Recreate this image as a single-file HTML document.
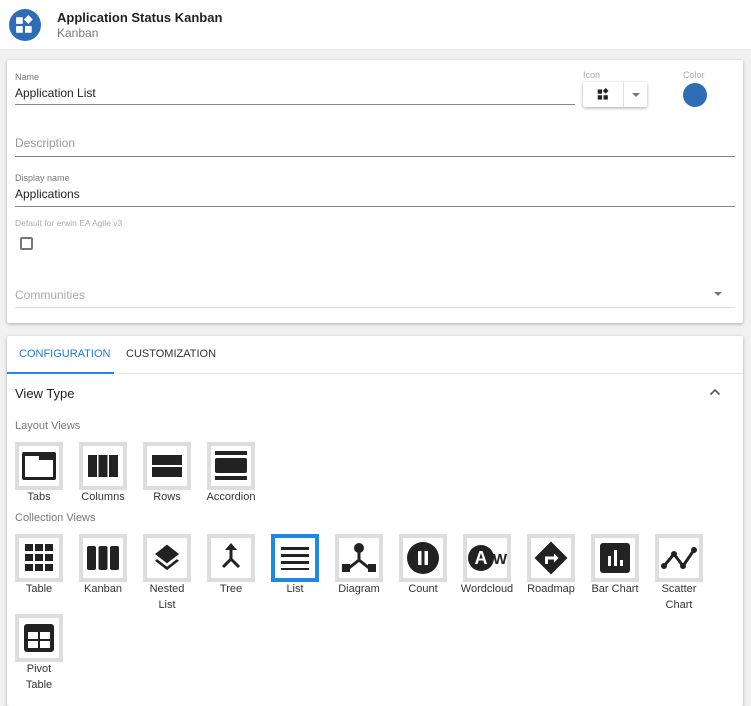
<!DOCTYPE html>
<html><head><meta charset="utf-8"><style>
*{box-sizing:border-box;margin:0;padding:0}
body{width:751px;height:695px;overflow:hidden;background:#f1f1f1;font-family:"Liberation Sans",Roboto,sans-serif;color:#222;position:relative}
.abs{position:absolute}
.hdr{left:0;top:0;width:751px;height:50px;background:#fff;border-bottom:1px solid #e4e4e4}
.card{background:#fff;box-shadow:0 1px 3px rgba(0,0,0,.3);border-radius:2px}
.lbl{font-size:9px;color:#777}
.lbl2{font-size:9px;color:#aaa}
.val{font-size:12px;color:#222}
.line{height:1px;background:#888}
.tile{width:48px;height:48px;border:4px solid #ddd;background:#fff;display:flex;align-items:center;justify-content:center}
.tile svg{flex-shrink:0}
.tile.sel{border-color:#1e88e5}
.tl{font-size:11px;color:#333;text-align:center;width:64px;line-height:16px}
</style></head><body>
<div class="abs hdr">
 <div class="abs" style="left:9px;top:9px;width:32px;height:32px;border-radius:50%;background:#2e6db3"></div>
 <svg class="abs" style="left:15px;top:15px" width="20" height="20" viewBox="0 0 18 18" fill="#fff"><rect x="1" y="2" width="6" height="6"/><rect x="1" y="10" width="6" height="6"/><rect x="9" y="10" width="6" height="6"/><path d="M12 0l4 4-4 4-4-4z"/></svg>
 <div class="abs" style="left:57px;top:10px;font-size:13px;font-weight:bold;color:#222">Application Status Kanban</div>
 <div class="abs" style="left:57px;top:26px;font-size:12px;color:#777">Kanban</div>
</div>
<div class="abs card" style="left:7px;top:60px;width:736px;height:263px"></div>
<div class="abs lbl" style="left:15px;top:72px">Name</div>
<div class="abs val" style="left:15px;top:86px">Application List</div>
<div class="abs line" style="left:15px;top:104px;width:560px"></div>
<div class="abs lbl2" style="left:583px;top:70px">Icon</div>
<div class="abs" style="left:583px;top:82px;width:64px;height:25px;background:#fff;box-shadow:0 1px 3px rgba(0,0,0,.35);border-radius:2px">
 <svg class="abs" style="left:14px;top:6px" width="13" height="13" viewBox="0 0 18 18" fill="#222"><rect x="1" y="2" width="6" height="6"/><rect x="1" y="10" width="6" height="6"/><rect x="9" y="10" width="6" height="6"/><path d="M12 0l4 4-4 4-4-4z"/></svg>
 <div class="abs" style="left:40px;top:0;width:1px;height:25px;background:#e0e0e0"></div>
 <div class="abs" style="left:49px;top:11px;border-left:4px solid transparent;border-right:4px solid transparent;border-top:4px solid #777"></div>
</div>
<div class="abs lbl2" style="left:683px;top:70px">Color</div>
<div class="abs" style="left:683px;top:83px;width:24px;height:24px;border-radius:50%;background:#2e6db3"></div>
<div class="abs" style="left:15px;top:136px;font-size:12px;color:#999">Description</div>
<div class="abs line" style="left:15px;top:156px;width:720px"></div>
<div class="abs lbl" style="left:15px;top:173px">Display name</div>
<div class="abs val" style="left:15px;top:187px">Applications</div>
<div class="abs line" style="left:15px;top:206px;width:720px"></div>
<div class="abs lbl2" style="left:15px;top:218px;font-size:8.5px">Default for erwin EA Agile v3</div>
<div class="abs" style="left:20px;top:237px;width:13px;height:13px;border:2px solid #777;border-radius:2px"></div>
<div class="abs" style="left:15px;top:288px;font-size:12px;color:#aaa">Communities</div>
<div class="abs" style="left:714px;top:292px;border-left:4px solid transparent;border-right:4px solid transparent;border-top:4px solid #777"></div>
<div class="abs" style="left:15px;top:307px;width:720px;height:1px;background:#ddd"></div>

<div class="abs card" style="left:7px;top:336px;width:736px;height:370px"></div>
<div class="abs" style="left:19px;top:348px;font-size:11px;color:#1e78d8">CONFIGURATION</div>
<div class="abs" style="left:126px;top:348px;font-size:11px;color:#333">CUSTOMIZATION</div>
<div class="abs" style="left:7px;top:373px;width:736px;height:1px;background:#e6e6e6"></div>
<div class="abs" style="left:7px;top:372px;width:107px;height:2px;background:#1e88e5"></div>
<div class="abs" style="left:15px;top:386px;font-size:13px;color:#222">View Type</div>
<svg class="abs" style="left:709px;top:388px" width="12" height="8" viewBox="0 0 12 8"><path d="M1.5 6.5L6 2l4.5 4.5" stroke="#555" stroke-width="1.6" fill="none"/></svg>
<div class="abs" style="left:15px;top:420px;font-size:11px;color:#777">Layout Views</div>
<div class="abs" style="left:15px;top:512px;font-size:11px;color:#777">Collection Views</div>

<div class="abs tile" style="left:15px;top:442px"><svg width="36" height="30" viewBox="0 0 36 30"><path d="M3 1h30a2 2 0 0 1 2 2v24a2 2 0 0 1-2 2H3a2 2 0 0 1-2-2V3a2 2 0 0 1 2-2zM4 5v21h28V9H18V5z" fill="#222" fill-rule="evenodd"/></svg></div>
<div class="abs tl" style="left:7px;top:489px">Tabs</div>
<div class="abs tile" style="left:79px;top:442px"><svg width="30" height="22" fill="#222"><rect x="0" y="0" width="9" height="22"/><rect x="10.5" y="0" width="9" height="22"/><rect x="21" y="0" width="9" height="22"/></svg></div>
<div class="abs tl" style="left:71px;top:489px">Columns</div>
<div class="abs tile" style="left:143px;top:442px"><svg width="30" height="22" fill="#222"><rect x="0" y="0" width="30" height="10"/><rect x="0" y="12" width="30" height="10"/></svg></div>
<div class="abs tl" style="left:135px;top:489px">Rows</div>
<div class="abs tile" style="left:207px;top:442px"><svg width="32" height="30" fill="#222"><rect x="0" y="0" width="32" height="4"/><rect x="0" y="7" width="32" height="15" rx="2"/><rect x="0" y="25" width="32" height="4"/></svg></div>
<div class="abs tl" style="left:199px;top:489px">Accordion</div>

<div class="abs tile" style="left:15px;top:534px"><svg width="28" height="28" fill="#222"><rect x="0" y="0" width="8" height="7"/><rect x="10" y="0" width="8" height="7"/><rect x="20" y="0" width="8" height="7"/><rect x="0" y="10" width="8" height="7"/><rect x="10" y="10" width="8" height="7"/><rect x="20" y="10" width="8" height="7"/><rect x="0" y="20" width="8" height="7"/><rect x="10" y="20" width="8" height="7"/><rect x="20" y="20" width="8" height="7"/></svg></div>
<div class="abs tl" style="left:7px;top:581px">Table</div>
<div class="abs tile" style="left:79px;top:534px"><svg width="32" height="24" fill="#222"><rect x="0" y="0" width="9" height="24" rx="2"/><rect x="11.5" y="0" width="9" height="24" rx="2"/><rect x="23" y="0" width="9" height="24" rx="2"/></svg></div>
<div class="abs tl" style="left:71px;top:581px">Kanban</div>
<div class="abs tile" style="left:143px;top:534px"><svg width="32" height="32" viewBox="0 0 24 24" fill="#222"><path d="M11.99 18.54l-7.37-5.73L3 14.07l9 7 9-7-1.63-1.27-7.38 5.74zM12 16l7.36-5.73L21 9l-9-7-9 7 1.63 1.27L12 16z"/></svg></div>
<div class="abs tl" style="left:135px;top:581px">Nested<br>List</div>
<div class="abs tile" style="left:207px;top:534px"><svg width="26" height="32" viewBox="0 0 26 32"><path d="M13 4v13l-8 8M13 17l8 8" stroke="#222" stroke-width="3" fill="none"/><path d="M13 1l-6 7h12z" fill="#222"/></svg></div>
<div class="abs tl" style="left:199px;top:581px">Tree</div>
<div class="abs tile sel" style="left:271px;top:534px"><svg width="28" height="24" fill="#222"><rect x="0" y="1" width="28" height="3"/><rect x="0" y="8" width="28" height="3"/><rect x="0" y="15" width="28" height="3"/><rect x="0" y="22" width="28" height="3"/></svg></div>
<div class="abs tl" style="left:263px;top:581px">List</div>
<div class="abs tile" style="left:335px;top:534px"><svg width="36" height="32" viewBox="0 0 36 32"><circle cx="18" cy="6" r="5" fill="#222"/><path d="M18 9v9l-10 8M18 18l10 8" stroke="#222" stroke-width="3" fill="none"/><rect x="1" y="22" width="8" height="8" fill="#222"/><rect x="27" y="22" width="8" height="8" fill="#222"/></svg></div>
<div class="abs tl" style="left:327px;top:581px">Diagram</div>
<div class="abs tile" style="left:399px;top:534px"><svg width="34" height="34"><circle cx="17" cy="17" r="16" fill="#222"/><rect x="12" y="10" width="3.5" height="14" fill="#fff"/><rect x="18.5" y="10" width="3.5" height="14" fill="#fff"/></svg></div>
<div class="abs tl" style="left:391px;top:581px">Count</div>
<div class="abs tile" style="left:463px;top:534px"><svg width="40" height="32" viewBox="0 0 40 32"><circle cx="14" cy="16" r="13" fill="#222"/><text x="14" y="22" font-family="Liberation Sans" font-weight="bold" font-size="18" fill="#fff" text-anchor="middle">A</text><text x="33" y="22" font-family="Liberation Sans" font-weight="bold" font-size="15" fill="#222" text-anchor="middle">W</text></svg></div>
<div class="abs tl" style="left:455px;top:581px">Wordcloud</div>
<div class="abs tile" style="left:527px;top:534px"><svg width="36" height="36" viewBox="0 0 24 24"><path d="M12 1l11 11-11 11L1 12z" fill="#222"/><path d="M9 16v-4h6" stroke="#fff" stroke-width="2" fill="none"/><path d="M14 9l3 3-3 3z" fill="#fff"/></svg></div>
<div class="abs tl" style="left:519px;top:581px">Roadmap</div>
<div class="abs tile" style="left:591px;top:534px"><svg width="30" height="30"><rect x="0" y="0" width="30" height="30" rx="3" fill="#222"/><rect x="8" y="13" width="3" height="10" fill="#fff"/><rect x="14" y="7" width="3" height="16" fill="#fff"/><rect x="20" y="17" width="3" height="6" fill="#fff"/></svg></div>
<div class="abs tl" style="left:583px;top:581px">Bar Chart</div>
<div class="abs tile" style="left:655px;top:534px"><svg width="38" height="26" viewBox="0 0 38 26"><path d="M4 21L14 9l9 12L34 5" stroke="#222" stroke-width="3" fill="none"/><circle cx="4" cy="21" r="3" fill="#222"/><circle cx="14" cy="9" r="3" fill="#222"/><circle cx="23" cy="21" r="3" fill="#222"/><circle cx="34" cy="5" r="3" fill="#222"/></svg></div>
<div class="abs tl" style="left:647px;top:581px">Scatter<br>Chart</div>
<div class="abs tile" style="left:15px;top:614px"><svg width="30" height="28"><rect x="0" y="0" width="30" height="28" rx="3" fill="#222"/><rect x="4" y="8" width="10" height="7" fill="#fff"/><rect x="16" y="8" width="10" height="7" fill="#fff"/><rect x="4" y="17" width="10" height="7" fill="#fff"/><rect x="16" y="17" width="10" height="7" fill="#fff"/></svg></div>
<div class="abs tl" style="left:7px;top:661px">Pivot<br>Table</div>
</body></html>
